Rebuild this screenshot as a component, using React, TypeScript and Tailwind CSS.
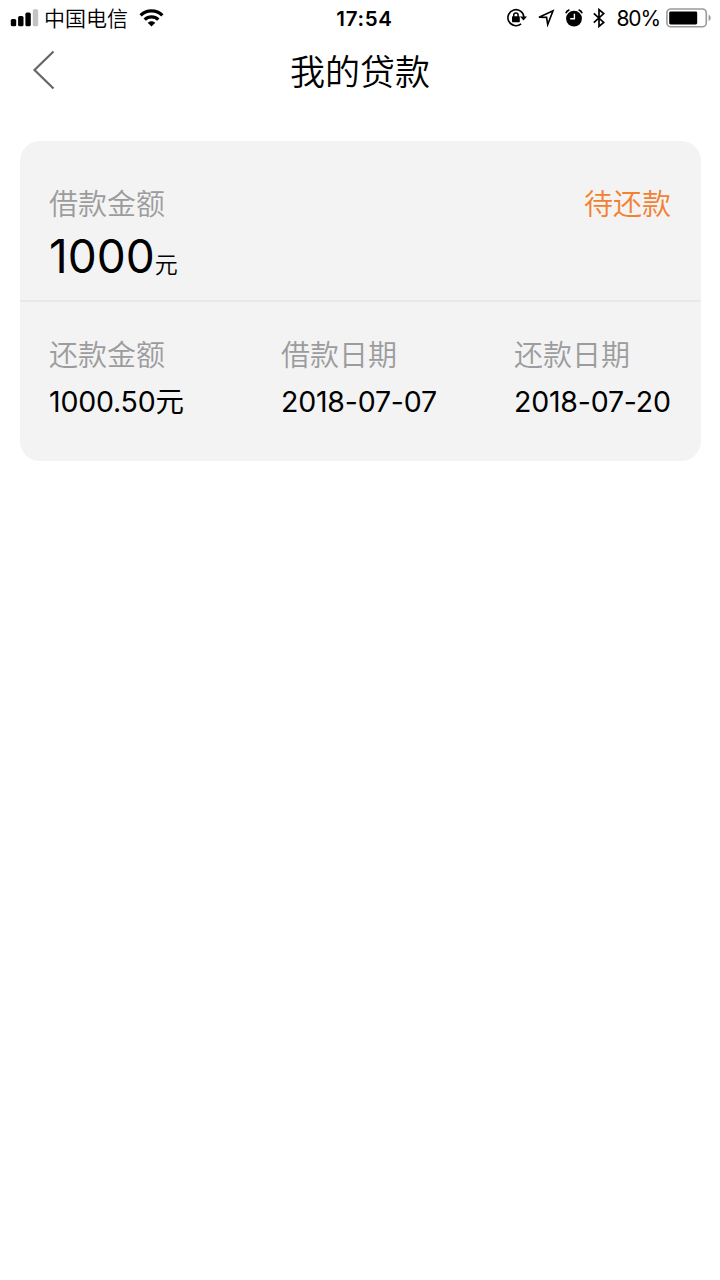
import React from 'react';

interface Loan {
  amount: string;
  status: string;
  repayment: string;
  loanDate: string;
  dueDate: string;
}

const loan: Loan = {
  amount: '1000',
  status: '待还款',
  repayment: '1000.50',
  loanDate: '2018-07-07',
  dueDate: '2018-07-20',
};

const SignalIcon: React.FC = () => (
  <svg className="h-[18px] w-[29px] shrink-0" viewBox="0 0 29 18">
    <rect x="0.8" y="10" width="5.4" height="7.3" rx="1.6" />
    <rect x="8.1" y="7" width="5.4" height="10.3" rx="1.6" />
    <rect x="15.4" y="3.6" width="5.4" height="13.7" rx="1.6" />
    <rect x="22.8" y="0.2" width="5.4" height="17.1" rx="1.6" fill="#c3c3c3" />
  </svg>
);

const WifiIcon: React.FC = () => (
  <svg className="h-[18px] w-[25px] shrink-0" viewBox="0 0 25 18" fill="none" stroke="#000" strokeWidth="3.3">
    <path d="M1.6 6.4C7.6 0.4 17.4 0.4 23.4 6.4" />
    <path d="M5.7 10.6C9.5 6.9 15.5 6.9 19.3 10.6" />
    <path d="M8.7 13.7C10.8 11.6 14.2 11.6 16.3 13.7L12.5 17.5Z" fill="#000" stroke="none" />
  </svg>
);

const RotationLockIcon: React.FC = () => (
  <svg className="h-5 w-5 shrink-0" viewBox="0 0 20 20" fill="none" stroke="#000" strokeWidth="1.6">
    <path d="M14.1 15.8A8 8 0 1 1 16.9 9.2" />
    <path d="M12.9 8.6H20L16.5 12.6Z" fill="#000" stroke="none" />
    <rect x="5" y="8.3" width="7.8" height="6" rx="0.8" fill="#000" stroke="none" />
    <path d="M6.7 9V7.2A2.2 2.2 0 0 1 11.1 7.2V9" strokeWidth="1.5" />
  </svg>
);

const LocationIcon: React.FC = () => (
  <svg className="h-[18px] w-[18px] shrink-0" viewBox="0 0 18 18" fill="none" stroke="#000" strokeWidth="1.6">
    <path d="M2 8.3L16 1.8L10.7 15.6L9.6 8.4Z" />
  </svg>
);

const AlarmIcon: React.FC = () => (
  <svg className="h-[18px] w-[18px] shrink-0" viewBox="0 0 18 18" fill="none" stroke="#000">
    <circle cx="9" cy="9.6" r="7.9" fill="#000" stroke="none" />
    <path d="M0.9 4.3C1.4 2.5 2.7 1.3 4.4 0.9M13.6 0.9C15.3 1.3 16.6 2.5 17.1 4.3" strokeWidth="1.8" />
    <path d="M9.4 4.8V9.8H5.2" stroke="#fff" strokeWidth="1.4" />
  </svg>
);

const BluetoothIcon: React.FC = () => (
  <svg className="h-5 w-3 shrink-0" viewBox="0 0 12 20" fill="none" stroke="#000" strokeWidth="1.7">
    <path d="M0.8 5.3L10.7 14.5L6 18.4V1.6L10.7 5.5L0.8 14.7" />
  </svg>
);

const BatteryIcon: React.FC = () => (
  <svg className="h-5 w-[46px] shrink-0" viewBox="0 0 46 20">
    <rect x="0.9" y="1" width="39.4" height="17.8" rx="4" fill="none" stroke="#9a9a9a" strokeWidth="1.6" />
    <rect x="3.2" y="3.4" width="28" height="13" rx="1.4" />
    <path d="M42.6 6.7C45.4 7.8 45.4 12 42.6 13.1Z" fill="#9a9a9a" />
  </svg>
);

const StatusBar: React.FC = () => (
  <div className="flex h-9 items-center justify-between pr-[8px] pl-[10px] text-[21px]">
    <div className="flex w-[257px] items-center">
      <SignalIcon />
      <span className="mr-[11px] ml-[5px] pt-0.5">中国电信</span>
      <WifiIcon />
    </div>
    <span className="pt-0.5 text-[20.5px] font-semibold tracking-[0.7px]">17:54</span>
    <div className="flex w-[250px] items-center justify-end">
      <div className="flex items-center gap-[10px]">
        <RotationLockIcon />
        <LocationIcon />
        <AlarmIcon />
        <BluetoothIcon />
      </div>
      <span className="mr-[6px] ml-[11.5px] pt-0.5 font-normal tracking-[-1.1px]">80%</span>
      <BatteryIcon />
    </div>
  </div>
);

interface FieldProps {
  label: string;
  value: string;
}

const Field: React.FC<FieldProps> = ({ label, value }) => (
  <div>
    <p className="text-[29px] leading-[48px] text-[#9c9c9e]">{label}</p>
    <p className="text-[28.5px] leading-[44px] font-normal tracking-[-0.2px] whitespace-nowrap">{value}</p>
  </div>
);

const App: React.FC = () => {
  return (
    <div className="min-h-screen bg-white font-['Inter','Noto_Sans_CJK_SC',sans-serif] font-[350] text-black">
      <StatusBar />
      <header className="grid h-[72px] grid-cols-[1fr_auto_1fr] items-center px-8">
        <button aria-label="返回" className="-mt-1">
          <svg className="h-10 w-6" viewBox="0 0 24 40" fill="none" stroke="#666" strokeWidth="2.2">
            <path d="M21.5 1.5L2.5 20L21.5 38.5" />
          </svg>
        </button>
        <h1 className="text-[35px]">我的贷款</h1>
      </header>

      <main className="px-[19.5px] pt-[32.5px]">
        <section className="h-[320.5px] rounded-[20px] bg-[#f3f3f3]">
          <div className="flex h-[161.5px] justify-between border-b-2 border-[#e8e8e8] px-[29.5px] pt-[40.5px] text-[29px] leading-[48px]">
            <div>
              <p className="text-[#9c9c9e]">借款金额</p>
              <p className="flex items-baseline leading-[55px]">
                <span className="text-[46px] font-normal">{loan.amount}</span>
                <span className="text-[23px]">元</span>
              </p>
            </div>
            <p className="text-[#f28130]">{loan.status}</p>
          </div>
          <div className="grid grid-cols-[232px_233px_1fr] px-[29.5px] pt-[30px]">
            <Field label="还款金额" value={`${loan.repayment}元`} />
            <Field label="借款日期" value={loan.loanDate} />
            <Field label="还款日期" value={loan.dueDate} />
          </div>
        </section>
      </main>
    </div>
  );
};

export default App;
